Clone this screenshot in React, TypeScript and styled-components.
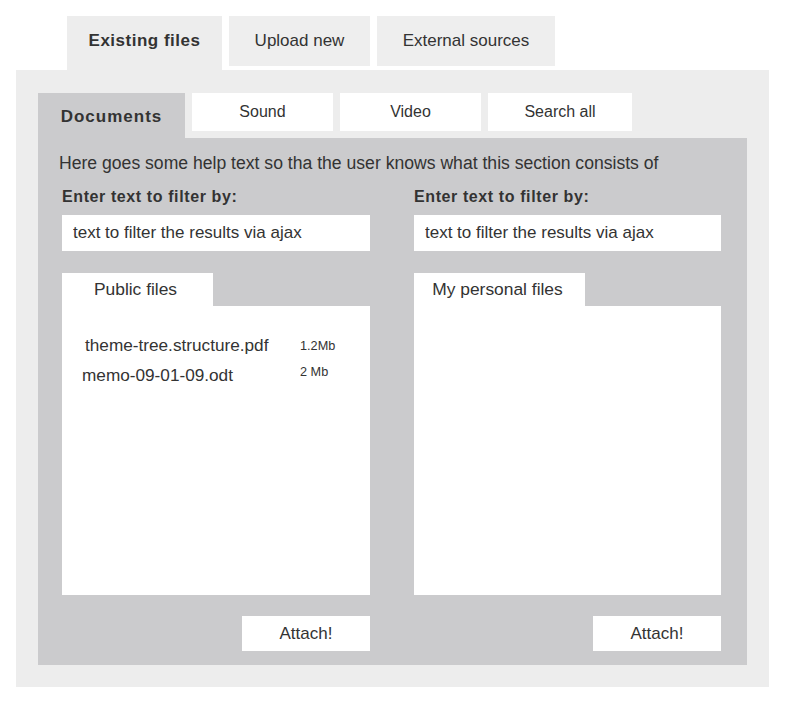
import styled, { createGlobalStyle } from "styled-components"

const GlobalStyle = createGlobalStyle`
  body {
    margin: 0;
    background: #ffffff;
    color: #333333;
    font-family: "Liberation Sans", Arial, sans-serif;
  }
`

export const Page = styled.div`
  padding: 16px 16px 0;
  width: 753px;
`

export const SourceTabs = styled.nav`
  align-items: flex-start;
  display: flex;
  gap: 7px;
  height: 54px;
  padding-left: 51px;
`

export const SourceTab = styled.div<{ $active?: boolean; $width: number }>`
  align-items: center;
  background: ${({ $active }) => ($active ? "#ededed" : "#eeeeee")};
  display: flex;
  font-size: 17px;
  font-weight: ${({ $active }) => ($active ? "bold" : "normal")};
  height: ${({ $active }) => ($active ? "54px" : "50px")};
  justify-content: center;
  letter-spacing: ${({ $active }) => ($active ? "0.5px" : "0")};
  padding-bottom: ${({ $active }) => ($active ? "4px" : "0")};
  box-sizing: border-box;
  width: ${({ $width }) => $width}px;
`

export const SourcePanel = styled.section`
  background: #ededed;
  padding: 23px 22px 22px;
`

export const TypeTabs = styled.div`
  align-items: flex-start;
  display: flex;
  gap: 7px;
  height: 45px;
`

export const TypeTab = styled.div<{ $active?: boolean; $width: number }>`
  align-items: center;
  background: ${({ $active }) => ($active ? "#cbcbcd" : "#ffffff")};
  box-sizing: border-box;
  display: flex;
  font-size: ${({ $active }) => ($active ? "17px" : "16px")};
  font-weight: ${({ $active }) => ($active ? "bold" : "normal")};
  height: ${({ $active }) => ($active ? "45px" : "38px")};
  justify-content: center;
  letter-spacing: ${({ $active }) => ($active ? "1px" : "0")};
  padding-top: ${({ $active }) => ($active ? "2px" : "0")};
  width: ${({ $width }) => $width}px;
`

export const TypePanel = styled.div`
  background: #cbcbcd;
  padding: 15px 26px 14px 21px;
`

export const HelpText = styled.p`
  font-size: 17.6px;
  line-height: 20px;
  margin: 0;
`

export const Columns = styled.div`
  display: grid;
  grid-template-columns: 308px 307px;
  column-gap: 44px;
  margin-top: 14px;
  padding-left: 3px;
`

export const Column = styled.div`
  display: flex;
  flex-direction: column;
`

export const FilterLabel = styled.label`
  font-size: 16px;
  font-weight: bold;
  letter-spacing: 0.6px;
  line-height: 20px;
`

export const FilterInput = styled.input`
  background: #ffffff;
  border: none;
  box-sizing: border-box;
  color: #333333;
  font-family: "Liberation Sans", Arial, sans-serif;
  font-size: 17px;
  height: 36px;
  margin-top: 8px;
  outline: none;
  padding: 0 11px;
  width: 100%;
`

export const ListTab = styled.div<{ $width: number }>`
  align-items: center;
  background: #ffffff;
  box-sizing: border-box;
  display: flex;
  font-size: 17.4px;
  height: 33px;
  justify-content: center;
  margin-top: 22px;
  padding-right: 4px;
  width: ${({ $width }) => $width}px;
`

export const FileBox = styled.div`
  background: #ffffff;
  box-sizing: border-box;
  height: 289px;
  padding-top: 24px;
`

export const FileRow = styled.div`
  align-items: center;
  display: grid;
  grid-template-columns: 238px auto;
  height: 30px;
`

export const FileName = styled.span<{ $indent: number }>`
  font-size: 17.2px;
  padding-left: ${({ $indent }) => $indent}px;
`

export const FileSize = styled.span<{ $raise?: boolean }>`
  font-size: 12.7px;
  position: relative;
  top: ${({ $raise }) => ($raise ? "-3px" : "1px")};
`

export const AttachButton = styled.button`
  align-self: flex-end;
  background: #ffffff;
  border: none;
  color: #333333;
  font-family: "Liberation Sans", Arial, sans-serif;
  font-size: 17px;
  height: 35px;
  margin-top: 21px;
  padding: 0;
  width: 128px;
`

const publicFiles = [
  { name: "theme-tree.structure.pdf", size: "1.2Mb", indent: 23, raise: false },
  { name: "memo-09-01-09.odt", size: "2 Mb", indent: 20, raise: true },
]

function FilterColumn({ title, files }: { title: string; files: typeof publicFiles }) {
  return (
    <Column>
      <FilterLabel>Enter text to filter by:</FilterLabel>
      <FilterInput readOnly value="text to filter the results via ajax" />
      <ListTab $width={title === "Public files" ? 151 : 171}>{title}</ListTab>
      <FileBox>
        {files.map((f) => (
          <FileRow key={f.name}>
            <FileName $indent={f.indent}>{f.name}</FileName>
            <FileSize $raise={f.raise}>{f.size}</FileSize>
          </FileRow>
        ))}
      </FileBox>
      <AttachButton>Attach!</AttachButton>
    </Column>
  )
}

export default function App() {
  return (
    <Page>
      <GlobalStyle />
      <SourceTabs>
        <SourceTab $active $width={155}>Existing files</SourceTab>
        <SourceTab $width={141}>Upload new</SourceTab>
        <SourceTab $width={178}>External sources</SourceTab>
      </SourceTabs>
      <SourcePanel>
        <TypeTabs>
          <TypeTab $active $width={147}>Documents</TypeTab>
          <TypeTab $width={141}>Sound</TypeTab>
          <TypeTab $width={141}>Video</TypeTab>
          <TypeTab $width={144}>Search all</TypeTab>
        </TypeTabs>
        <TypePanel>
          <HelpText>Here goes some help text so tha the user knows what this section consists of</HelpText>
          <Columns>
            <FilterColumn title="Public files" files={publicFiles} />
            <FilterColumn title="My personal files" files={[]} />
          </Columns>
        </TypePanel>
      </SourcePanel>
    </Page>
  )
}
